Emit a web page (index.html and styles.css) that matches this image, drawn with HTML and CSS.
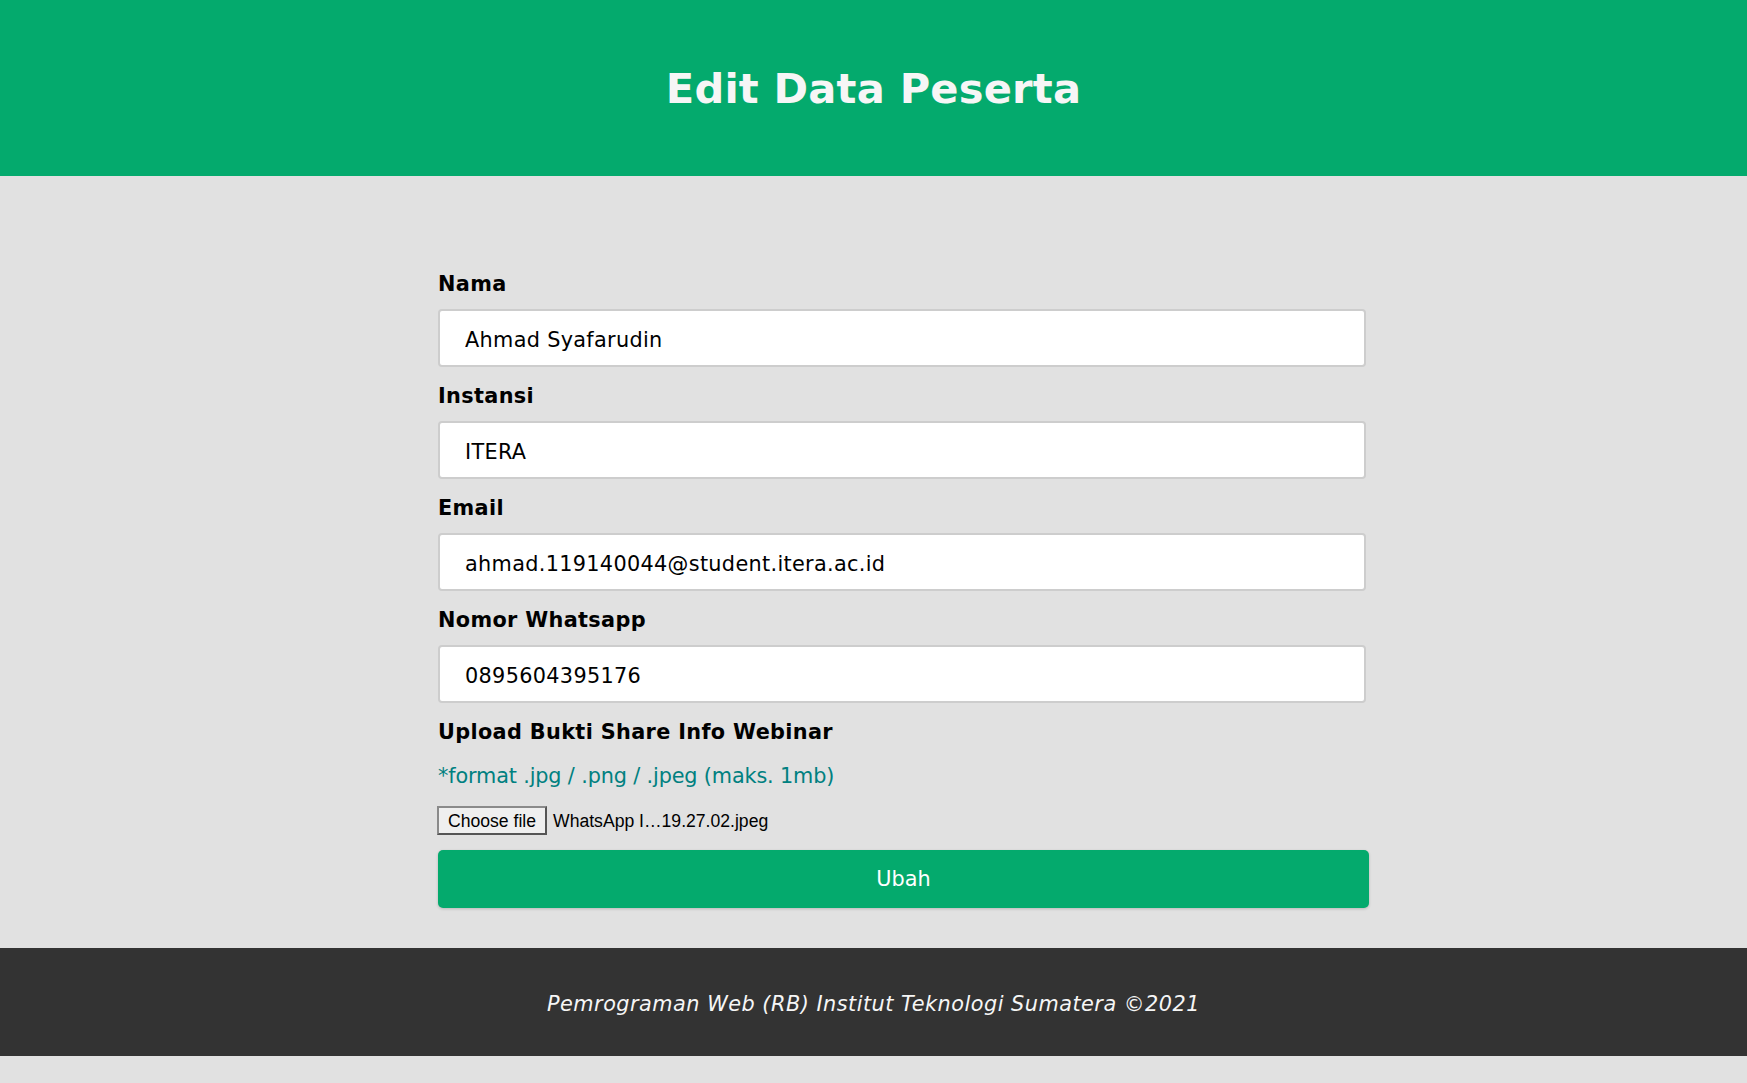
FILE: index.html
```html
<!DOCTYPE html>
<html lang="id">
<head>
<meta charset="utf-8">
<title>Edit Data Peserta</title>
<link rel="stylesheet" href="styles.css">
</head>
<body>
<header class="topbar">
  <h1 class="title">Edit Data Peserta</h1>
</header>
<main class="content">
  <form class="form">
    <div class="field">
      <label class="label">Nama</label>
      <input class="input" type="text" value="Ahmad Syafarudin">
    </div>
    <div class="field">
      <label class="label">Instansi</label>
      <input class="input" type="text" value="ITERA">
    </div>
    <div class="field">
      <label class="label">Email</label>
      <input class="input" type="text" value="ahmad.119140044@student.itera.ac.id">
    </div>
    <div class="field">
      <label class="label">Nomor Whatsapp</label>
      <input class="input" type="text" value="0895604395176">
    </div>
    <label class="label">Upload Bukti Share Info Webinar</label>
    <p class="hint">*format .jpg / .png / .jpeg (maks. 1mb)</p>
    <div class="file-row">
      <span class="file-btn">Choose file</span>
      <span class="file-name">WhatsApp I…19.27.02.jpeg</span>
    </div>
    <button class="submit" type="button">Ubah</button>
  </form>
</main>
<footer class="footer">
  <p class="footer-text">Pemrograman Web (RB) Institut Teknologi Sumatera ©2021</p>
</footer>
</body>
</html>
```
FILE: styles.css
```css
html, body {
  margin: 0;
  padding: 0;
}
body {
  background: #e1e1e1;
  font-family: Verdana, "DejaVu Sans", sans-serif;
  font-size: 20.8px;
  line-height: 24px;
  color: #000;
}
.topbar {
  background: #04aa6d;
  padding: 65px 0 63px;
  text-align: center;
}
.title {
  margin: 0;
  font-size: 41.6px;
  line-height: 48px;
  font-weight: bold;
  letter-spacing: 0.2px;
  color: #f6f6f6;
}
.content {
  padding: 96px 0 40px;
}
.form {
  display: flex;
  flex-direction: column;
  align-items: flex-start;
  margin-left: 438px;
  width: 931px;
}
.field {
  display: flex;
  flex-direction: column;
  align-self: stretch;
}
.label {
  display: block;
  font-weight: bold;
  letter-spacing: 0.35px;
  margin-bottom: 13px;
}
.input {
  box-sizing: border-box;
  width: 928px;
  height: 58px;
  margin: 0 0 17px;
  padding: 3px 25px 0;
  border: 2px solid #cdcdcd;
  border-radius: 4px;
  background: #fff;
  font-family: Verdana, "DejaVu Sans", sans-serif;
  font-size: 20.8px;
  line-height: 24px;
  letter-spacing: 0.32px;
  color: #000;
  outline: none;
}
.label + .hint {
  margin-top: 7px;
}
.hint {
  margin: 0 0 18px;
  letter-spacing: -0.15px;
  color: #008080;
}
.file-row {
  display: flex;
  align-items: center;
  gap: 6px;
  height: 29px;
  font-family: "Liberation Sans", Arial, sans-serif;
  font-size: 17.6px;
  margin-left: -1px;
}
.file-btn {
  box-sizing: border-box;
  display: inline-flex;
  align-items: center;
  height: 29px;
  padding: 0 9px;
  background: #efefef;
  border: 2px solid;
  border-color: #8a8a8a #555 #555 #8a8a8a;
  color: #000;
}
.file-name {
  color: #000;
}
.submit {
  margin-top: 15px;
  width: 931px;
  height: 58px;
  border: none;
  border-radius: 5px;
  background: #04aa6d;
  color: #fff;
  font-family: Verdana, "DejaVu Sans", sans-serif;
  font-size: 20.8px;
  line-height: 24px;
  box-shadow: 0 1px 3px rgba(0, 0, 0, 0.18);
  cursor: pointer;
}
.footer {
  background: #333;
  height: 108px;
  display: flex;
  align-items: center;
  justify-content: center;
}
.footer-text {
  margin: 4px 0 0;
  color: #f6f6f6;
  font-style: italic;
  letter-spacing: 0.5px;
}
```
